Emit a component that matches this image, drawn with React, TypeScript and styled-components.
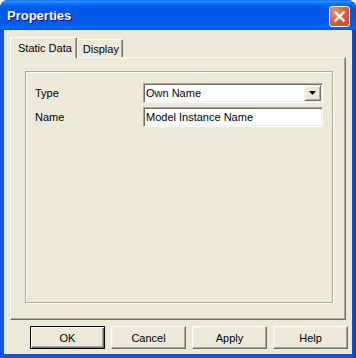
import styled, { createGlobalStyle } from "styled-components";

const GlobalStyle = createGlobalStyle`
  html, body {
    margin: 0;
    padding: 0;
    background: #ffffff;
  }
  body {
    font-family: "Liberation Sans", Arial, sans-serif;
    font-size: 11px;
    color: #000;
  }
`;

const Window = styled.div`
  width: 356px;
  height: 358px;
  box-sizing: border-box;
  display: flex;
  flex-direction: column;
  background: linear-gradient(to right, #0831d9 0px, #1763ea 1px, #0a55e4 2px, #0a55e4 352px, #0843d5 354px, #0831d9 356px);
  border-radius: 8px 8px 0 0;
  overflow: hidden;
`;

const TitleBar = styled.div`
  height: 30px;
  flex: none;
  display: flex;
  align-items: center;
  justify-content: space-between;
  padding: 0 6px 0 7px;
  box-sizing: border-box;
  background: linear-gradient(
    to bottom,
    #0058ee 0px,
    #3593ff 1px,
    #288eff 2px,
    #127dff 3px,
    #036ffc 4px,
    #0262ee 6px,
    #0058e8 8px,
    #0058e8 14px,
    #005aee 22px,
    #005ef5 25px,
    #026afe 27px,
    #0062ef 29px,
    #0052d6 30px
  );
`;

const Title = styled.span`
  color: #fff;
  font-family: "Liberation Sans", Arial, sans-serif;
  font-weight: bold;
  font-size: 13px;
  text-shadow: 1px 1px 0 #0f1089;
  padding-top: 1px;
`;

const CloseButton = styled.div`
  width: 21px;
  height: 21px;
  box-sizing: border-box;
  border: 1px solid #fff;
  border-radius: 3px;
  background: radial-gradient(circle at 30% 25%, #f0906e 0%, #e0623a 45%, #c9441d 100%);
  display: flex;
  align-items: center;
  justify-content: center;
  margin-top: 2px;
`;

const Client = styled.div`
  flex: 1;
  margin: 0 4px 4px 4px;
  background: #ece9d8;
  display: flex;
  flex-direction: column;
  padding: 7px 6px 5px 6px;
  box-sizing: border-box;
`;

const TabStrip = styled.div`
  height: 20px;
  display: flex;
  align-items: flex-end;
  position: relative;
  z-index: 1;
`;

const Tab = styled.div<{ $active?: boolean }>`
  box-sizing: border-box;
  height: ${(p) => (p.$active ? "21px" : "18px")};
  margin-bottom: ${(p) => (p.$active ? "-1px" : "0")};
  padding: ${(p) => (p.$active ? "3px 4px 0 7px" : "2px 3px 0 5px")};
  background: #ece9d8;
  border-top: 1px solid #fff;
  border-left: 1px solid #fff;
  border-right: 1px solid #716f64;
  border-radius: 2px 2px 0 0;
  box-shadow: inset -1px 0 0 #aca899;
  white-space: nowrap;
  line-height: 14px;
`;

const Panel = styled.div`
  height: 263px;
  box-sizing: border-box;
  border-top: 1px solid #fff;
  border-left: 1px solid #fff;
  border-right: 1px solid #716f64;
  border-bottom: 1px solid #716f64;
  box-shadow: inset -1px -1px 0 #aca899;
  padding: 13px 12px 16px 14px;
  display: flex;
`;

const GroupBox = styled.div`
  flex: 1;
  box-sizing: border-box;
  border: 1px solid #aca899;
  box-shadow: inset 1px 1px 0 #fff, 1px 1px 0 #fff;
  padding: 11px 0 0 9px;
`;

const FieldGrid = styled.div`
  display: grid;
  grid-template-columns: 108px 180px;
  row-gap: 4px;
  align-items: center;
`;

const Label = styled.span`
  line-height: 14px;
`;

const Sunken = styled.div<{ $h: number }>`
  box-sizing: border-box;
  height: ${(p) => p.$h}px;
  background: #fff;
  border-style: solid;
  border-width: 1px;
  border-color: #aca899 #fff #fff #aca899;
  box-shadow: inset 1px 1px 0 #716f64, inset -1px -1px 0 #f1efe2;
  display: flex;
  align-items: center;
  padding-left: 2px;
  line-height: 14px;
`;

const ComboText = styled.span`
  flex: 1;
`;

const DropButton = styled.div`
  width: 17px;
  height: 16px;
  box-sizing: border-box;
  margin-right: 1px;
  background: #ece9d8;
  border-style: solid;
  border-width: 1px;
  border-color: #f1efe2 #716f64 #716f64 #f1efe2;
  box-shadow: inset 1px 1px 0 #fff, inset -1px -1px 0 #aca899;
  display: flex;
  align-items: center;
  justify-content: center;
`;

const ButtonRow = styled.div`
  display: flex;
  gap: 6px;
  margin-top: 6px;
  margin-right: -2px;
  padding-left: 20px;
`;

const Button = styled.div<{ $default?: boolean }>`
  width: 75px;
  height: 23px;
  flex: none;
  box-sizing: border-box;
  background: #ece9d8;
  border-style: solid;
  border-width: 1px;
  border-color: ${(p) => (p.$default ? "#000" : "#fff #716f64 #716f64 #fff")};
  box-shadow: ${(p) =>
    p.$default
      ? "inset 1px 1px 0 #fff, inset -1px -1px 0 #716f64, inset -2px -2px 0 #aca899"
      : "inset -1px -1px 0 #aca899, inset 1px 1px 0 #f1efe2"};
  display: flex;
  align-items: center;
  justify-content: center;
  line-height: 14px;
`;

export default function App() {
  return (
    <>
      <GlobalStyle />
      <Window>
        <TitleBar>
          <Title>Properties</Title>
          <CloseButton>
            <svg width="13" height="13" viewBox="0 0 13 13">
              <path d="M2.5 2.5 L10.5 10.5 M10.5 2.5 L2.5 10.5" stroke="#fff" strokeWidth="2.4" strokeLinecap="square" />
            </svg>
          </CloseButton>
        </TitleBar>
        <Client>
          <TabStrip>
            <Tab $active>Static Data</Tab>
            <Tab>Display</Tab>
          </TabStrip>
          <Panel>
            <GroupBox>
              <FieldGrid>
                <Label>Type</Label>
                <Sunken $h={20}>
                  <ComboText>Own Name</ComboText>
                  <DropButton>
                    <svg width="7" height="4" viewBox="0 0 7 4">
                      <path d="M0 0 H7 L3.5 4 Z" fill="#000" />
                    </svg>
                  </DropButton>
                </Sunken>
                <Label>Name</Label>
                <Sunken $h={20}>Model Instance Name</Sunken>
              </FieldGrid>
            </GroupBox>
          </Panel>
          <ButtonRow>
            <Button $default>OK</Button>
            <Button>Cancel</Button>
            <Button>Apply</Button>
            <Button>Help</Button>
          </ButtonRow>
        </Client>
      </Window>
    </>
  );
}
